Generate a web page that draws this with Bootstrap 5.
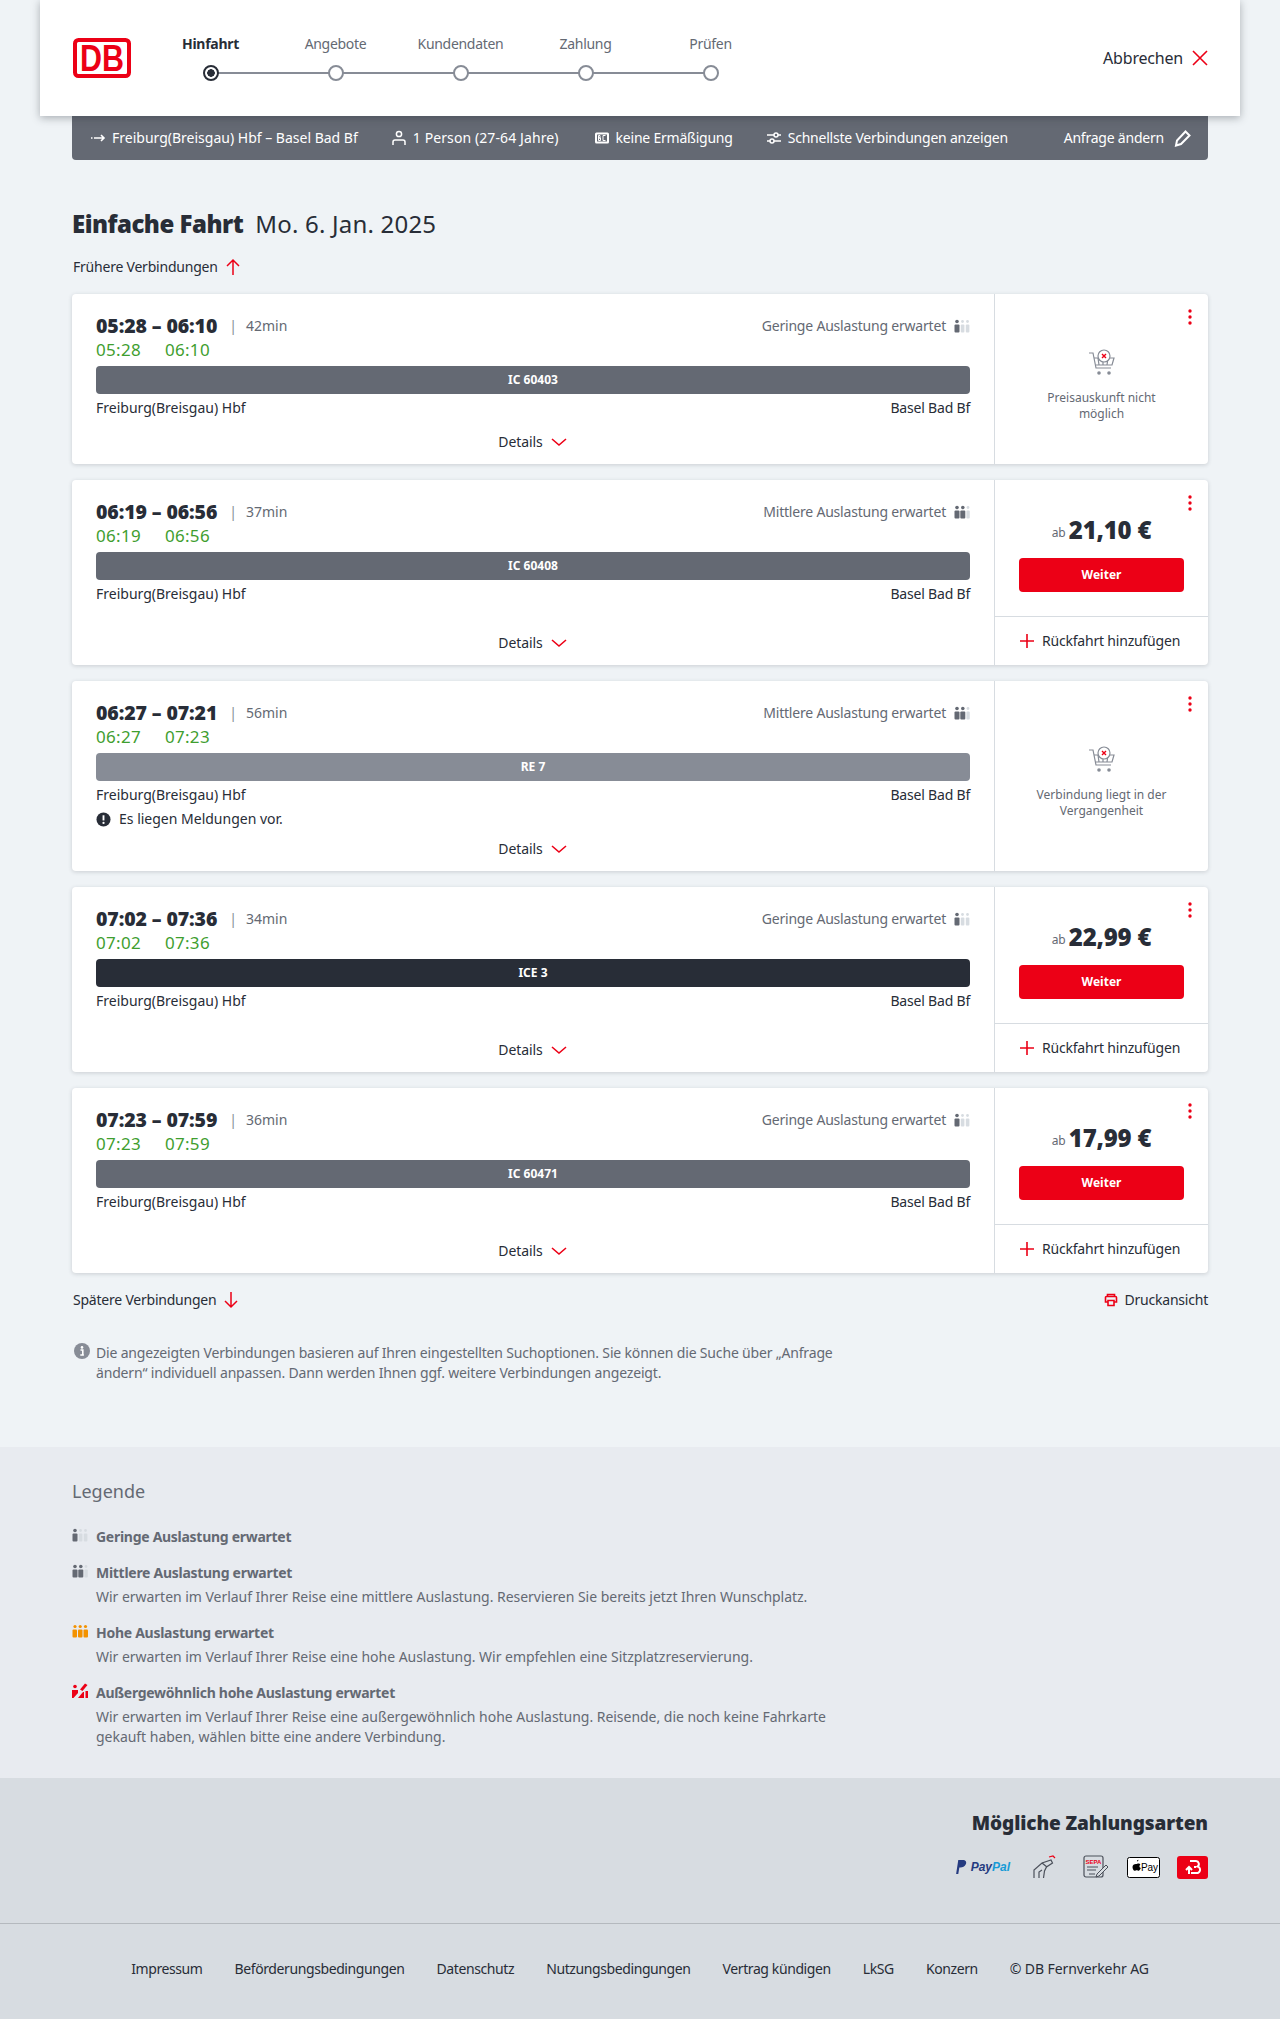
<!DOCTYPE html>
<html lang="de">
<head>
<meta charset="UTF-8">
<meta name="viewport" content="width=device-width, initial-scale=1.0">
<title>Angebote</title>
<link href="https://cdn.jsdelivr.net/npm/bootstrap@5.3.0/dist/css/bootstrap.min.css" rel="stylesheet">
<style>
body { background: #eff3f6; color: #282d37; font-family: "Noto Sans", sans-serif; font-size: 14px; line-height: 20px; }
a { color: inherit; text-decoration: none; }
svg { display: block; flex: none; }
.wrap { width: 1136px; margin: 0 auto; }
.top-head { width: 1200px; height: 116px; margin: 0 auto; padding: 0 32px; background: #fff; box-shadow: 0 2px 8px rgba(40,45,55,.35); position: relative; z-index: 2; }
.step-list { width: 625px; margin: -2px 0 0 16px; position: relative; }
.step-line { position: absolute; left: 62px; right: 62px; top: 38px; height: 2px; background: #878c96; }
.step-item { width: 125px; color: #646973; position: relative; letter-spacing: -.3px; }
.step-item.on { color: #282d37; font-weight: 700; }
.step-dot { width: 16px; height: 16px; margin: 11px auto 0; border: 2px solid #878c96; border-radius: 50%; background: #fff; }
.on .step-dot { border-color: #282d37; background: radial-gradient(circle, #282d37 0 3.5px, #fff 4px); }
.abbr-link { font-size: 16px; gap: 9px; letter-spacing: -.2px; }
.sum-bar { height: 44px; padding: 0 16px 0 18px; background: #646973; color: #fff; border-radius: 0 0 4px 4px; }
.sum-bar .sum-item { gap: 6px; margin-right: 33px; }
.sum-bar .wide { letter-spacing: .1px; margin-right: 2px; }
.sum-bar .tight { letter-spacing: -.22px; }
.change-link { gap: 10px; }
.page-title { font-size: 24px; line-height: 32px; font-weight: 400; margin: 48px 0 0; letter-spacing: .2px; }
.page-title b { font-weight: 900; margin-right: 12px; letter-spacing: -.5px; }
.more-link { gap: 7px; margin-top: 17px; height: 20px; letter-spacing: -.22px; padding-left: 1px; }
.conn-card { background: #fff; border-radius: 4px; box-shadow: 0 1px 4px rgba(40,45,55,.18); margin-top: 16px; }
.conn-main { width: 923px; padding: 20px 24px 0; border-right: 1px solid #d7dce1; }
.time-row { height: 24px; }
.time-big { font-size: 19.5px; font-weight: 900; letter-spacing: -.1px; }
.time-sep { color: #878c96; margin: 0 9px 0 12px; }
.time-dur { color: #646973; }
.load-note { color: #646973; gap: 8px; letter-spacing: -.2px; }
.time-live { height: 24px; line-height: 24px; font-size: 17px; letter-spacing: .3px; color: #3f9e2f; gap: 24px; }
.train-bar { height: 28px; margin-top: 4px; border-radius: 4px; color: #fff; font-size: 12px; font-weight: 700; }
.train-ic { background: #646973; }
.train-re { background: #878c96; }
.train-ice { background: #282d37; }
.stop-row { margin: 4px 0; }
.stop-row span:last-child { letter-spacing: -.2px; }
.msg-row { gap: 8px; height: 20px; }
.detail-row { margin-top: auto; height: 42px; padding-bottom: 2px; gap: 7px; letter-spacing: -.1px; }
.conn-side { width: 213px; position: relative; }
.dots-btn { position: absolute; top: 15px; right: 15px; }
.side-top { height: 136px; padding: 0 24px 24px; }
.price-row { height: 30px; margin-bottom: 13px; gap: 3px; }
.price-from { font-size: 12px; color: #646973; padding-top: 6px; }
.price-val { font-size: 24px; font-weight: 900; letter-spacing: -.2px; }
.go-btn { height: 34px; font-size: 12px; font-weight: 700; background: #ec0016; border: 0; border-radius: 4px; color: #fff; padding: 0; }
.back-row { height: 49px; border-top: 1px solid #d7dce1; padding-left: 24px; gap: 7px; margin-top: auto; letter-spacing: -.2px; }
.side-none { padding: 12px 24px 0; color: #646973; font-size: 12px; line-height: 16px; text-align: center; }
.side-none svg { margin-bottom: 13px; }
.info-note { width: 790px; margin-top: 33px; margin-left: 2px; color: #646973; gap: 6px; letter-spacing: -.17px; }
.legend-zone { margin-top: 64px; background: #e8ebf0; padding: 32px 0 31px; color: #646973; }
.legend-head { font-size: 18px; line-height: 24px; }
.legend-item { margin-top: 16px; gap: 8px; }
.legend-item b { font-weight: 700; letter-spacing: -.28px; }
.legend-item p { width: 760px; margin: 4px 0 0; letter-spacing: -.03px; }
.pay-zone { background: #d7dce1; height: 146px; padding-top: 31px; border-bottom: 1px solid #b4b9be; }
.pay-head { font-size: 19px; line-height: 28px; font-weight: 900; letter-spacing: -.1px; }
.pay-icons { height: 24px; margin-top: 18px; }
.paypal-txt { color: #253b80; font-family: "Liberation Sans", sans-serif; font-size: 12px; font-weight: 700; font-style: italic; }
.paypal-txt span { color: #179bd7; }
.foot-zone { background: #d7dce1; height: 96px; padding-top: 35px; gap: 32px; letter-spacing: -.4px; }
.foot-zone span { letter-spacing: -.1px; }
</style>
</head>
<body>

<svg width="0" height="0" class="position-absolute">
  <symbol id="i-low" viewBox="0 0 16 16"><circle cx="3" cy="3.5" r="1.8" fill="#646973"/><rect x=".5" y="6.5" width="5" height="8" rx="1" fill="#646973"/><circle cx="8.5" cy="3.5" r="1.4" fill="#d7dce1"/><rect x="6.8" y="6.5" width="3.6" height="8" rx="1" fill="#d7dce1"/><circle cx="13.5" cy="3.5" r="1.4" fill="#d7dce1"/><rect x="11.8" y="6.5" width="3.6" height="8" rx="1" fill="#d7dce1"/></symbol>
  <symbol id="i-mid" viewBox="0 0 16 16"><circle cx="3" cy="3.5" r="1.8" fill="#646973"/><rect x=".5" y="6.5" width="5" height="8" rx="1" fill="#646973"/><circle cx="8.8" cy="3.5" r="1.8" fill="#646973"/><rect x="6.3" y="6.5" width="5" height="8" rx="1" fill="#646973"/><circle cx="14" cy="3.5" r="1.4" fill="#d7dce1"/><rect x="12.4" y="6.5" width="3.4" height="8" rx="1" fill="#d7dce1"/></symbol>
  <symbol id="i-down" viewBox="0 0 18 10"><path d="M2 2l7 6 7-6" fill="none" stroke="#ec0016" stroke-width="1.6"/></symbol>
  <symbol id="i-dots" viewBox="0 0 6 16"><circle cx="3" cy="2" r="1.7" fill="#ec0016"/><circle cx="3" cy="8" r="1.7" fill="#ec0016"/><circle cx="3" cy="14" r="1.7" fill="#ec0016"/></symbol>
  <symbol id="i-plus" viewBox="0 0 16 16"><path d="M8 1v14M1 8h14" stroke="#ec0016" stroke-width="1.6"/></symbol>
  <symbol id="i-cart" viewBox="0 0 28 28"><g fill="none" stroke="#878c96" stroke-width="1.2"><path d="M1 4h4l3 15h15"/><path d="M6 9h20l-2 7H8"/><path d="M10 9l1 7M15 9v7M20 9l-1 7"/><circle cx="16" cy="7" r="6" fill="#fff"/></g><path d="M14 5l4 4M18 5l-4 4" stroke="#ec0016" stroke-width="1.4"/><circle cx="11" cy="24" r="1.8" fill="#878c96"/><circle cx="21" cy="24" r="1.8" fill="#878c96"/></symbol>
</svg>

<header class="top-head d-flex align-items-center">
  <svg width="60" height="40" viewBox="0 0 60 40" aria-label="DB">
    <rect x="3" y="2" width="54" height="36" rx="3.5" fill="#fff" stroke="#ec0016" stroke-width="4"/>
    <text x="8" y="33" font-family="Liberation Sans" font-weight="700" font-size="36" textLength="44" lengthAdjust="spacingAndGlyphs" fill="#ec0016">DB</text>
  </svg>
  <div class="step-list d-flex">
    <div class="step-line"></div>
    <div class="step-item on text-center">Hinfahrt<div class="step-dot"></div></div>
    <div class="step-item text-center">Angebote<div class="step-dot"></div></div>
    <div class="step-item text-center">Kundendaten<div class="step-dot"></div></div>
    <div class="step-item text-center">Zahlung<div class="step-dot"></div></div>
    <div class="step-item text-center">Prüfen<div class="step-dot"></div></div>
  </div>
  <a href="#" class="abbr-link d-flex align-items-center ms-auto">Abbrechen
    <svg width="16" height="16" viewBox="0 0 16 16"><path d="M1 1l14 14M15 1L1 15" stroke="#ec0016" stroke-width="1.6"/></svg>
  </a>
</header>

<div class="wrap">
  <div class="sum-bar d-flex align-items-center">
    <div class="sum-item d-flex align-items-center">
      <svg width="16" height="16" viewBox="0 0 16 16"><path d="M1 8h1.5M4 8h10M11 5l3 3-3 3" fill="none" stroke="#fff" stroke-width="1.6"/></svg>
      <span>Freiburg(Breisgau) Hbf – Basel Bad Bf</span>
    </div>
    <div class="sum-item d-flex align-items-center">
      <svg width="16" height="16" viewBox="0 0 16 16"><circle cx="8" cy="4" r="2.6" fill="none" stroke="#fff" stroke-width="1.5"/><path d="M2 15v-3a2 2 0 0 1 2-2h8a2 2 0 0 1 2 2v3" fill="none" stroke="#fff" stroke-width="1.5"/></svg>
      <span class="wide">1 Person (27-64 Jahre)</span>
    </div>
    <div class="sum-item d-flex align-items-center">
      <svg width="16" height="16" viewBox="0 0 16 16"><rect x="1" y="2.5" width="14" height="11" rx="1.5" fill="#fff"/><rect x="3" y="4.5" width="10" height="7" fill="#646973"/><path d="M4.5 5.5v5M4.5 5.5h1.5v2.5H4.5M4.5 8h2v2.5h-2M11.5 5.5h-2.5v5h2.5" fill="none" stroke="#fff" stroke-width="1"/></svg>
      <span class="tight">keine Ermäßigung</span>
    </div>
    <div class="sum-item d-flex align-items-center">
      <svg width="16" height="16" viewBox="0 0 16 16"><path d="M1 5h7M12 5h3M1 11h3M8 11h7" stroke="#fff" stroke-width="1.6"/><circle cx="10" cy="5" r="2" fill="none" stroke="#fff" stroke-width="1.5"/><circle cx="6" cy="11" r="2" fill="none" stroke="#fff" stroke-width="1.5"/></svg>
      <span class="tight">Schnellste Verbindungen anzeigen</span>
    </div>
    <a href="#" class="tight change-link d-flex align-items-center ms-auto">Anfrage ändern
      <svg width="18" height="18" viewBox="0 0 18 18"><path d="M11.5 2.5l4 4L7 15l-5 1.5L3 11.5z" fill="none" stroke="#fff" stroke-width="2"/></svg>
    </a>
  </div>

  <h1 class="page-title"><b>Einfache Fahrt</b>Mo. 6. Jan. 2025</h1>

  <a href="#" class="more-link d-flex align-items-center">Frühere Verbindungen
    <svg width="16" height="18" viewBox="0 0 16 18"><path d="M8 17V2M2 8l6-6 6 6" fill="none" stroke="#ec0016" stroke-width="1.5"/></svg>
  </a>

  <!-- 05:28 -->
  <article class="conn-card d-flex" style="margin-top:17px">
    <div class="conn-main d-flex flex-column">
      <div class="time-row d-flex align-items-center">
        <span class="time-big">05:28 – 06:10</span><span class="time-sep">|</span><span class="time-dur">42min</span>
        <div class="load-note d-flex align-items-center ms-auto">Geringe Auslastung erwartet <svg width="16" height="16"><use href="#i-low"/></svg></div>
      </div>
      <div class="time-live d-flex"><span>05:28</span><span>06:10</span></div>
      <div class="train-bar train-ic d-flex align-items-center justify-content-center">IC 60403</div>
      <div class="stop-row d-flex justify-content-between"><span>Freiburg(Breisgau) Hbf</span><span>Basel Bad Bf</span></div>
      <a href="#" class="detail-row d-flex align-items-center justify-content-center">Details <svg width="18" height="10"><use href="#i-down"/></svg></a>
    </div>
    <div class="conn-side d-flex flex-column">
      <svg class="dots-btn" width="6" height="16"><use href="#i-dots"/></svg>
      <div class="side-none d-flex flex-column align-items-center justify-content-center flex-grow-1">
        <svg width="28" height="28"><use href="#i-cart"/></svg>
        Preisauskunft nicht<br>möglich
      </div>
    </div>
  </article>

  <!-- 06:19 -->
  <article class="conn-card d-flex">
    <div class="conn-main d-flex flex-column">
      <div class="time-row d-flex align-items-center">
        <span class="time-big">06:19 – 06:56</span><span class="time-sep">|</span><span class="time-dur">37min</span>
        <div class="load-note d-flex align-items-center ms-auto">Mittlere Auslastung erwartet <svg width="16" height="16"><use href="#i-mid"/></svg></div>
      </div>
      <div class="time-live d-flex"><span>06:19</span><span>06:56</span></div>
      <div class="train-bar train-ic d-flex align-items-center justify-content-center">IC 60408</div>
      <div class="stop-row d-flex justify-content-between"><span>Freiburg(Breisgau) Hbf</span><span>Basel Bad Bf</span></div>
      <a href="#" class="detail-row d-flex align-items-center justify-content-center">Details <svg width="18" height="10"><use href="#i-down"/></svg></a>
    </div>
    <div class="conn-side d-flex flex-column">
      <svg class="dots-btn" width="6" height="16"><use href="#i-dots"/></svg>
      <div class="side-top d-flex flex-column justify-content-end">
        <div class="price-row d-flex align-items-center justify-content-center"><span class="price-from">ab</span><span class="price-val">21,10 €</span></div>
        <button class="go-btn btn">Weiter</button>
      </div>
      <a href="#" class="back-row d-flex align-items-center"><svg width="16" height="16"><use href="#i-plus"/></svg>Rückfahrt hinzufügen</a>
    </div>
  </article>

  <!-- 06:27 -->
  <article class="conn-card d-flex">
    <div class="conn-main d-flex flex-column">
      <div class="time-row d-flex align-items-center">
        <span class="time-big">06:27 – 07:21</span><span class="time-sep">|</span><span class="time-dur">56min</span>
        <div class="load-note d-flex align-items-center ms-auto">Mittlere Auslastung erwartet <svg width="16" height="16"><use href="#i-mid"/></svg></div>
      </div>
      <div class="time-live d-flex"><span>06:27</span><span>07:23</span></div>
      <div class="train-bar train-re d-flex align-items-center justify-content-center">RE 7</div>
      <div class="stop-row d-flex justify-content-between"><span>Freiburg(Breisgau) Hbf</span><span>Basel Bad Bf</span></div>
      <div class="msg-row d-flex align-items-center">
        <svg width="15" height="15" viewBox="0 0 16 16"><circle cx="8" cy="8" r="7.5" fill="#282d37"/><path d="M8 3.5v5.5" stroke="#fff" stroke-width="2"/><circle cx="8" cy="11.6" r="1.2" fill="#fff"/></svg>
        Es liegen Meldungen vor.
      </div>
      <a href="#" class="detail-row d-flex align-items-center justify-content-center">Details <svg width="18" height="10"><use href="#i-down"/></svg></a>
    </div>
    <div class="conn-side d-flex flex-column">
      <svg class="dots-btn" width="6" height="16"><use href="#i-dots"/></svg>
      <div class="side-none d-flex flex-column align-items-center justify-content-center flex-grow-1">
        <svg width="28" height="28"><use href="#i-cart"/></svg>
        Verbindung liegt in der<br>Vergangenheit
      </div>
    </div>
  </article>

  <!-- 07:02 -->
  <article class="conn-card d-flex">
    <div class="conn-main d-flex flex-column">
      <div class="time-row d-flex align-items-center">
        <span class="time-big">07:02 – 07:36</span><span class="time-sep">|</span><span class="time-dur">34min</span>
        <div class="load-note d-flex align-items-center ms-auto">Geringe Auslastung erwartet <svg width="16" height="16"><use href="#i-low"/></svg></div>
      </div>
      <div class="time-live d-flex"><span>07:02</span><span>07:36</span></div>
      <div class="train-bar train-ice d-flex align-items-center justify-content-center">ICE 3</div>
      <div class="stop-row d-flex justify-content-between"><span>Freiburg(Breisgau) Hbf</span><span>Basel Bad Bf</span></div>
      <a href="#" class="detail-row d-flex align-items-center justify-content-center">Details <svg width="18" height="10"><use href="#i-down"/></svg></a>
    </div>
    <div class="conn-side d-flex flex-column">
      <svg class="dots-btn" width="6" height="16"><use href="#i-dots"/></svg>
      <div class="side-top d-flex flex-column justify-content-end">
        <div class="price-row d-flex align-items-center justify-content-center"><span class="price-from">ab</span><span class="price-val">22,99 €</span></div>
        <button class="go-btn btn">Weiter</button>
      </div>
      <a href="#" class="back-row d-flex align-items-center"><svg width="16" height="16"><use href="#i-plus"/></svg>Rückfahrt hinzufügen</a>
    </div>
  </article>

  <!-- 07:23 -->
  <article class="conn-card d-flex">
    <div class="conn-main d-flex flex-column">
      <div class="time-row d-flex align-items-center">
        <span class="time-big">07:23 – 07:59</span><span class="time-sep">|</span><span class="time-dur">36min</span>
        <div class="load-note d-flex align-items-center ms-auto">Geringe Auslastung erwartet <svg width="16" height="16"><use href="#i-low"/></svg></div>
      </div>
      <div class="time-live d-flex"><span>07:23</span><span>07:59</span></div>
      <div class="train-bar train-ic d-flex align-items-center justify-content-center">IC 60471</div>
      <div class="stop-row d-flex justify-content-between"><span>Freiburg(Breisgau) Hbf</span><span>Basel Bad Bf</span></div>
      <a href="#" class="detail-row d-flex align-items-center justify-content-center">Details <svg width="18" height="10"><use href="#i-down"/></svg></a>
    </div>
    <div class="conn-side d-flex flex-column">
      <svg class="dots-btn" width="6" height="16"><use href="#i-dots"/></svg>
      <div class="side-top d-flex flex-column justify-content-end">
        <div class="price-row d-flex align-items-center justify-content-center"><span class="price-from">ab</span><span class="price-val">17,99 €</span></div>
        <button class="go-btn btn">Weiter</button>
      </div>
      <a href="#" class="back-row d-flex align-items-center"><svg width="16" height="16"><use href="#i-plus"/></svg>Rückfahrt hinzufügen</a>
    </div>
  </article>

  <div class="d-flex justify-content-between">
    <a href="#" class="more-link d-flex align-items-center">Spätere Verbindungen
      <svg width="16" height="18" viewBox="0 0 16 18"><path d="M8 1v15M2 10l6 6 6-6" fill="none" stroke="#ec0016" stroke-width="1.5"/></svg>
    </a>
    <a href="#" class="more-link d-flex align-items-center">
      <svg width="14" height="14" viewBox="0 0 14 14"><path d="M3.5 9H1.5V4.5a1 1 0 0 1 1-1h9a1 1 0 0 1 1 1V9h-2M3.5 3.5V1.5h7v2M4 7.5h6v5H4z" fill="none" stroke="#ec0016" stroke-width="1.6"/></svg>
      Druckansicht
    </a>
  </div>

  <div class="info-note d-flex">
    <svg width="16" height="16" viewBox="0 0 16 16"><circle cx="8" cy="8" r="8" fill="#878c96"/><circle cx="8" cy="4.4" r="1.3" fill="#fff"/><path d="M6.5 7h2.3v4.4M6.3 12h3.6" fill="none" stroke="#fff" stroke-width="1.6"/></svg>
    <div>Die angezeigten Verbindungen basieren auf Ihren eingestellten Suchoptionen. Sie können die Suche über „Anfrage<br>ändern“ individuell anpassen. Dann werden Ihnen ggf. weitere Verbindungen angezeigt.</div>
  </div>
</div>

<section class="legend-zone">
  <div class="wrap">
    <div class="legend-head">Legende</div>
    <div class="legend-item d-flex mt-4">
      <svg width="16" height="16"><use href="#i-low"/></svg>
      <div><b>Geringe Auslastung erwartet</b></div>
    </div>
    <div class="legend-item d-flex">
      <svg width="16" height="16"><use href="#i-mid"/></svg>
      <div><b>Mittlere Auslastung erwartet</b><p>Wir erwarten im Verlauf Ihrer Reise eine mittlere Auslastung. Reservieren Sie bereits jetzt Ihren Wunschplatz.</p></div>
    </div>
    <div class="legend-item d-flex">
      <svg width="16" height="16" viewBox="0 0 16 16"><g fill="#f39200"><circle cx="3" cy="3.5" r="1.6"/><rect x=".5" y="6.5" width="4.5" height="8" rx="1"/><circle cx="8.2" cy="3.5" r="1.6"/><rect x="6" y="6.5" width="4.5" height="8" rx="1"/><circle cx="13.5" cy="3.5" r="1.6"/><rect x="11.5" y="6.5" width="4.5" height="8" rx="1"/></g></svg>
      <div><b>Hohe Auslastung erwartet</b><p>Wir erwarten im Verlauf Ihrer Reise eine hohe Auslastung. Wir empfehlen eine Sitzplatzreservierung.</p></div>
    </div>
    <div class="legend-item d-flex">
      <svg width="16" height="16" viewBox="0 0 16 16"><g fill="#ec0016"><circle cx="3" cy="3.5" r="1.8"/><path d="M0 7h6v3L1.5 15H0z"/><path d="M8 6.5l5-6 2.5 1.5-5 6z"/><path d="M6 15l5-6h1v6z"/><rect x="13.5" y="8" width="2.5" height="7"/></g></svg>
      <div><b>Außergewöhnlich hohe Auslastung erwartet</b><p>Wir erwarten im Verlauf Ihrer Reise eine außergewöhnlich hohe Auslastung. Reisende, die noch keine Fahrkarte gekauft haben, wählen bitte eine andere Verbindung.</p></div>
    </div>
  </div>
</section>

<section class="pay-zone">
  <div class="wrap text-end">
    <div class="pay-head">Mögliche Zahlungsarten</div>
    <div class="pay-icons d-flex align-items-center justify-content-end">
      <svg width="11" height="14" viewBox="0 0 10 13" class="me-1"><path d="M2 0h4c3 0 4 2 3 4S6 7 4 7H3l-1 6H0z" fill="#253b80"/></svg>
      <span class="paypal-txt">Pay<span>Pal</span></span>
      <svg width="24" height="24" viewBox="0 0 24 24" style="margin-left:22px"><g fill="none" stroke="#4b505a" stroke-width="1.2"><path d="M2 23v-8l8-7 9-3 1.5 3-6 4-2 4-1 7"/><path d="M7 23v-6l3-2"/><path d="M10 8l5 4"/></g><path d="M17 2l4-1 2 2" fill="none" stroke="#ec0016" stroke-width="1.2"/></svg>
      <svg width="26" height="24" viewBox="0 0 26 24" style="margin-left:27px"><rect x="1" y="1" width="19" height="21" rx="2" fill="none" stroke="#4b505a" stroke-width="1.2"/><text x="10.5" y="8.5" text-anchor="middle" font-family="Liberation Sans" font-size="6" font-weight="700" fill="#ec0016">SEPA</text><path d="M4 12h11M4 15h9M6 19h6" stroke="#4b505a" stroke-width="1"/><path d="M14 19l9-9 2 2-9 9-3 1z" fill="#d7dce1" stroke="#4b505a" stroke-width="1"/></svg>
      <svg width="33" height="21" viewBox="0 0 33 21" style="margin-left:18px"><rect x=".5" y=".5" width="32" height="20" rx="2" fill="#fff" stroke="#000"/><path d="M9 7c1 0 1.5-.6 2.4-.6 1 0 1.600.5 2 1-1.500 1-1.200 3 .4 3.700-.5 1.300-1.300 2.700-2.200 2.700-.8 0-1-.5-1.900-.5s-1.200.5-2 .5C6.500 13.800 5.500 11.800 5.500 10c0-2 1.500-3 3.500-3zM10 4.500c.8-.1 1.500-.8 1.400-1.800-.8.100-1.600.9-1.400 1.800z" fill="#000"/><text x="22.5" y="14" text-anchor="middle" font-family="Liberation Sans" font-size="10" fill="#000">Pay</text></svg>
      <svg width="31" height="23" viewBox="0 0 31 23" style="margin-left:17px"><rect width="31" height="23" rx="3" fill="#ec0016"/><path d="M13 5h6a3 3 0 0 1 1.500 5.500A3.300 3.300 0 0 1 19 17h-5M9 14l3-3 3 3M12 11v7M17 11h2" fill="none" stroke="#fff" stroke-width="2"/></svg>
    </div>
  </div>
</section>

<footer class="foot-zone d-flex justify-content-center">
  <a href="#">Impressum</a>
  <a href="#">Beförderungsbedingungen</a>
  <a href="#">Datenschutz</a>
  <a href="#">Nutzungsbedingungen</a>
  <a href="#">Vertrag kündigen</a>
  <a href="#">LkSG</a>
  <a href="#">Konzern</a>
  <span>© DB Fernverkehr AG</span>
</footer>

<script src="https://cdn.jsdelivr.net/npm/bootstrap@5.3.0/dist/js/bootstrap.bundle.min.js"></script>
</body>
</html>
